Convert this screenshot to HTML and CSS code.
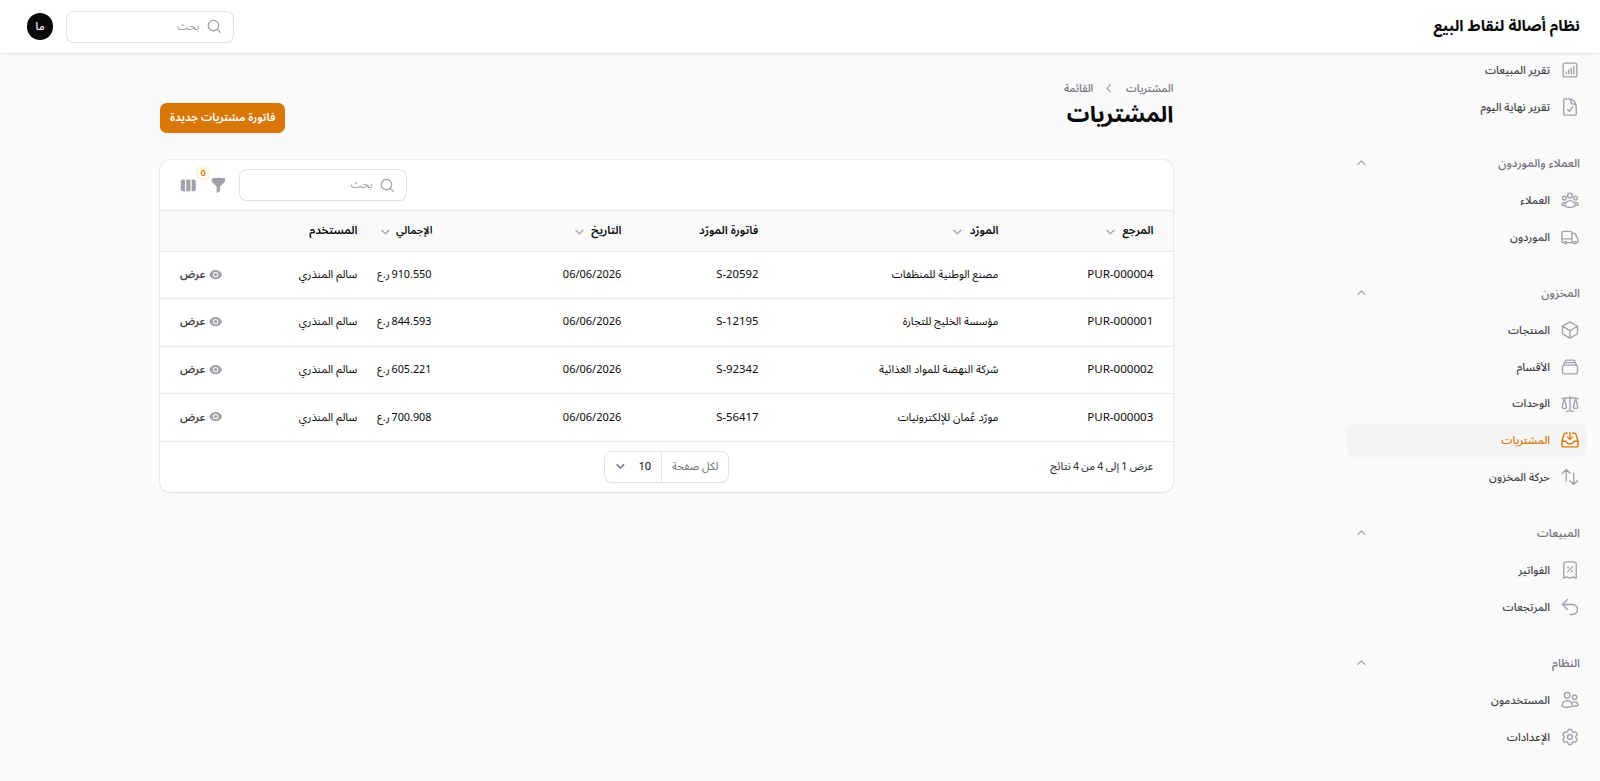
FILE: index.html
```html
<!DOCTYPE html>
<html lang="ar" dir="rtl">
<head>
    <meta charset="UTF-8">
    <meta name="viewport" content="width=device-width, initial-scale=1.0">
    <title>المشتريات</title>
    <link rel="stylesheet" href="styles.css">
</head>
<body>
    <!-- icons -->
    <svg class="sprite">
        <symbol id="chart" viewBox="0 0 24 24"><path d="M7.5 14.25v2.25m3-4.5v4.5m3-6.75v6.75m3-9v9M6 20.25h12A2.25 2.25 0 0 0 20.25 18V6A2.25 2.25 0 0 0 18 3.75H6A2.25 2.25 0 0 0 3.75 6v12A2.25 2.25 0 0 0 6 20.25Z"/></symbol>
        <symbol id="doc" viewBox="0 0 24 24"><path d="M10.125 2.25h-4.5c-.621 0-1.125.504-1.125 1.125v17.25c0 .621.504 1.125 1.125 1.125h12.75c.621 0 1.125-.504 1.125-1.125v-9M10.125 2.25h.375a9 9 0 0 1 9 9v.375M10.125 2.25A3.375 3.375 0 0 1 13.5 5.625v1.5c0 .621.504 1.125 1.125 1.125h1.5a3.375 3.375 0 0 1 3.375 3.375M9 15l2.25 2.25L15 12"/></symbol>
        <symbol id="group" viewBox="0 0 24 24"><path d="M18 18.72a9.094 9.094 0 0 0 3.741-.479 3 3 0 0 0-4.682-2.72m.94 3.198.001.031c0 .225-.012.447-.037.666A11.944 11.944 0 0 1 12 21c-2.17 0-4.207-.576-5.963-1.584A6.062 6.062 0 0 1 6 18.719m12 0a5.971 5.971 0 0 0-.941-3.197m0 0A5.995 5.995 0 0 0 12 12.75a5.995 5.995 0 0 0-5.058 2.772m0 0a3 3 0 0 0-4.681 2.72 8.986 8.986 0 0 0 3.74.477m.94-3.197a5.971 5.971 0 0 0-.94 3.197M15 6.75a3 3 0 1 1-6 0 3 3 0 0 1 6 0Zm6 3a2.25 2.25 0 1 1-4.5 0 2.25 2.25 0 0 1 4.5 0Zm-13.5 0a2.25 2.25 0 1 1-4.5 0 2.25 2.25 0 0 1 4.5 0Z"/></symbol>
        <symbol id="truck" viewBox="0 0 24 24"><path d="M8.25 18.75a1.5 1.5 0 0 1-3 0m3 0a1.5 1.5 0 0 0-3 0m3 0h6m-9 0H3.375a1.125 1.125 0 0 1-1.125-1.125V14.25m17.25 4.5a1.5 1.5 0 0 1-3 0m3 0a1.5 1.5 0 0 0-3 0m3 0h1.125c.621 0 1.129-.504 1.09-1.124a17.902 17.902 0 0 0-3.213-9.193 2.056 2.056 0 0 0-1.58-.86H14.25M16.5 18.75h-2.25m0-11.177v-.958c0-.568-.422-1.048-.987-1.106a48.554 48.554 0 0 0-10.026 0 1.106 1.106 0 0 0-.987 1.106v7.635m12-6.677v6.677m0 4.5v-4.5m0 0h-12"/></symbol>
        <symbol id="cube" viewBox="0 0 24 24"><path d="m21 7.5-9-5.25L3 7.5m18 0-9 5.25m9-5.25v9l-9 5.25M3 7.5l9 5.25M3 7.5v9l9 5.25m0-9v9"/></symbol>
        <symbol id="stack" viewBox="0 0 24 24"><path d="M6 6.878V6a2.25 2.25 0 0 1 2.25-2.25h7.5A2.25 2.25 0 0 1 18 6v.878m-12 0c.235-.083.487-.128.75-.128h10.5c.263 0 .515.045.75.128m-12 0A2.25 2.25 0 0 0 4.5 9v.878m13.5-3A2.25 2.25 0 0 1 19.5 9v.878m0 0a2.246 2.246 0 0 0-.75-.128H5.25c-.263 0-.515.045-.75.128m15 0A2.25 2.25 0 0 1 21 12v6a2.25 2.25 0 0 1-2.25 2.25H5.25A2.25 2.25 0 0 1 3 18v-6c0-.98.626-1.813 1.5-2.122"/></symbol>
        <symbol id="scale" viewBox="0 0 24 24"><path d="M12 3v17.25m0 0c-1.472 0-2.882.265-4.185.75M12 20.25c1.472 0 2.882.265 4.185.75M18.75 4.97A48.416 48.416 0 0 0 12 4.5c-2.291 0-4.545.16-6.75.47m13.5 0c1.01.143 2.01.317 3 .52m-3-.52 2.62 10.726c.122.499-.106 1.028-.589 1.202a5.988 5.988 0 0 1-2.031.352 5.988 5.988 0 0 1-2.031-.352c-.483-.174-.711-.703-.59-1.202L18.75 4.971Zm-16.5.52c.99-.203 1.99-.377 3-.52m0 0 2.62 10.726c.122.499-.106 1.028-.589 1.202a5.989 5.989 0 0 1-2.031.352 5.989 5.989 0 0 1-2.031-.352c-.483-.174-.711-.703-.59-1.202L5.25 4.971Z"/></symbol>
        <symbol id="inbox" viewBox="0 0 24 24"><path d="M9 3.75H6.912a2.25 2.25 0 0 0-2.15 1.588L2.35 13.177a2.25 2.25 0 0 0-.1.661V18a2.25 2.25 0 0 0 2.25 2.25h15A2.25 2.25 0 0 0 21.75 18v-4.162c0-.224-.034-.447-.1-.661L19.24 5.338a2.25 2.25 0 0 0-2.15-1.588H15M2.25 13.5h3.86a2.25 2.25 0 0 1 2.012 1.244l.256.512a2.25 2.25 0 0 0 2.013 1.244h3.218a2.25 2.25 0 0 0 2.013-1.244l.256-.512a2.25 2.25 0 0 1 2.013-1.244h3.859M12 3v8.25m0 0-3-3m3 3 3-3"/></symbol>
        <symbol id="updown" viewBox="0 0 24 24"><path d="M3 7.5 7.5 3m0 0L12 7.5M7.5 3v13.5m13.5 0L16.5 21m0 0L12 16.5m4.5 4.5V7.5"/></symbol>
        <symbol id="receipt" viewBox="0 0 24 24"><path d="m9 14.25 6-6m4.5-3.493V21.75l-3.75-1.5-3.75 1.5-3.75-1.5-3.75 1.5V4.757c0-1.108.806-2.057 1.907-2.185a48.507 48.507 0 0 1 11.186 0c1.1.128 1.907 1.077 1.907 2.185ZM9.75 9h.008v.008H9.75V9Zm.375 0a.375.375 0 1 1-.75 0 .375.375 0 0 1 .75 0Zm4.125 4.5h.008v.008h-.008V13.5Zm.375 0a.375.375 0 1 1-.75 0 .375.375 0 0 1 .75 0Z"/></symbol>
        <symbol id="return" viewBox="0 0 24 24"><path d="M9 15 3 9m0 0 6-6M3 9h12a6 6 0 0 1 0 12h-3"/></symbol>
        <symbol id="users" viewBox="0 0 24 24"><path d="M15 19.128a9.38 9.38 0 0 0 2.625.372 9.337 9.337 0 0 0 4.121-.952 4.125 4.125 0 0 0-7.533-2.493M15 19.128v-.003c0-1.113-.285-2.16-.786-3.07M15 19.128v.106A12.318 12.318 0 0 1 8.624 21c-2.331 0-4.512-.645-6.374-1.766l-.001-.109a6.375 6.375 0 0 1 11.964-3.07M12 6.375a3.375 3.375 0 1 1-6.75 0 3.375 3.375 0 0 1 6.75 0Zm8.25 2.25a2.625 2.625 0 1 1-5.25 0 2.625 2.625 0 0 1 5.25 0Z"/></symbol>
        <symbol id="cog" viewBox="0 0 24 24"><path d="M9.594 3.94c.09-.542.56-.94 1.11-.94h2.593c.55 0 1.02.398 1.11.94l.213 1.281c.063.374.313.686.645.87.074.04.147.083.22.127.325.196.72.257 1.075.124l1.217-.456a1.125 1.125 0 0 1 1.37.49l1.296 2.247a1.125 1.125 0 0 1-.26 1.431l-1.003.827c-.293.241-.438.613-.43.992a7.723 7.723 0 0 1 0 .255c-.008.378.137.75.43.991l1.004.827c.424.35.534.955.26 1.43l-1.298 2.247a1.125 1.125 0 0 1-1.369.491l-1.217-.456c-.355-.133-.75-.072-1.076.124a6.47 6.47 0 0 1-.22.128c-.331.183-.581.495-.644.869l-.213 1.281c-.09.543-.56.94-1.11.94h-2.594c-.55 0-1.019-.398-1.11-.94l-.213-1.281c-.062-.374-.312-.686-.644-.87a6.52 6.52 0 0 1-.22-.127c-.325-.196-.72-.257-1.076-.124l-1.217.456a1.125 1.125 0 0 1-1.369-.49l-1.297-2.247a1.125 1.125 0 0 1 .26-1.431l1.004-.827c.292-.24.437-.613.43-.991a6.932 6.932 0 0 1 0-.255c.007-.38-.138-.751-.43-.992l-1.004-.827a1.125 1.125 0 0 1-.26-1.43l1.297-2.247a1.125 1.125 0 0 1 1.37-.491l1.216.456c.356.133.751.072 1.076-.124.072-.044.146-.086.22-.128.332-.183.582-.495.644-.869l.214-1.28Z"/><path d="M15 12a3 3 0 1 1-6 0 3 3 0 0 1 6 0Z"/></symbol>
        <symbol id="up" viewBox="0 0 20 20"><path d="M9.47 6.47a.75.75 0 0 1 1.06 0l4.25 4.25a.75.75 0 1 1-1.06 1.06L10 8.06l-3.72 3.72a.75.75 0 0 1-1.06-1.06l4.25-4.25Z"/></symbol>
        <symbol id="down" viewBox="0 0 20 20"><path d="M5.22 8.22a.75.75 0 0 1 1.06 0L10 11.94l3.72-3.72a.75.75 0 1 1 1.06 1.06l-4.25 4.25a.75.75 0 0 1-1.06 0L5.22 9.28a.75.75 0 0 1 0-1.06Z"/></symbol>
        <symbol id="left" viewBox="0 0 20 20"><path d="M11.78 5.22a.75.75 0 0 1 0 1.06L8.06 10l3.72 3.72a.75.75 0 1 1-1.06 1.06l-4.25-4.25a.75.75 0 0 1 0-1.06l4.25-4.25a.75.75 0 0 1 1.06 0Z"/></symbol>
        <symbol id="search" viewBox="0 0 20 20"><path d="M9 3.5a5.5 5.5 0 1 0 0 11 5.5 5.5 0 0 0 0-11ZM2 9a7 7 0 1 1 12.452 4.391l3.328 3.329a.75.75 0 1 1-1.06 1.06l-3.329-3.328A7 7 0 0 1 2 9Z" fill-rule="evenodd"/></symbol>
        <symbol id="eye" viewBox="0 0 20 20"><path d="M10 12.5a2.5 2.5 0 1 0 0-5 2.5 2.5 0 0 0 0 5Z"/><path fill-rule="evenodd" d="M.664 10.59a1.651 1.651 0 0 1 0-1.186A10.004 10.004 0 0 1 10 3c4.257 0 7.893 2.66 9.336 6.41.147.381.146.804 0 1.186A10.004 10.004 0 0 1 10 17c-4.257 0-7.893-2.66-9.336-6.41ZM14 10a4 4 0 1 1-8 0 4 4 0 0 1 8 0Z"/></symbol>
        <symbol id="funnel" viewBox="0 0 20 20"><path d="M2.628 1.601C5.028 1.206 7.49 1 10 1s4.973.206 7.372.601a.75.75 0 0 1 .628.74v2.288a2.25 2.25 0 0 1-.659 1.59l-4.682 4.683a2.25 2.25 0 0 0-.659 1.59v3.037c0 .684-.31 1.33-.844 1.757l-1.937 1.55A.75.75 0 0 1 8 18.25v-5.757a2.25 2.25 0 0 0-.659-1.591L2.659 6.22A2.25 2.25 0 0 1 2 4.629V2.34a.75.75 0 0 1 .628-.74Z"/></symbol>
        <symbol id="columns" viewBox="0 0 20 20"><path d="M14 17h2.75A2.25 2.25 0 0 0 19 14.75v-9.5A2.25 2.25 0 0 0 16.75 3H14v14ZM12.5 3h-5v14h5V3ZM3.25 3H6v14H3.25A2.25 2.25 0 0 1 1 14.75v-9.5A2.25 2.25 0 0 1 3.25 3Z"/></symbol>
    </svg>

    <header class="topbar">
        <div class="brand">نظام أصالة لنقاط البيع</div>
        <div class="topbar-end">
            <label class="search">
                <svg class="mini"><use href="#search"/></svg>
                <input type="text" placeholder="بحث">
            </label>
            <div class="avatar">ما</div>
        </div>
    </header>

    <div class="layout">
        <nav class="sidebar">
            <div class="group">
                <a class="item"><svg class="icon"><use href="#chart"/></svg><span>تقرير المبيعات</span></a>
                <a class="item"><svg class="icon"><use href="#doc"/></svg><span>تقرير نهاية اليوم</span></a>
            </div>
            <div class="group">
                <div class="group-title"><span>العملاء والموردون</span><svg class="mini"><use href="#up"/></svg></div>
                <a class="item"><svg class="icon"><use href="#group"/></svg><span>العملاء</span></a>
                <a class="item"><svg class="icon"><use href="#truck"/></svg><span>الموردون</span></a>
            </div>
            <div class="group">
                <div class="group-title"><span>المخزون</span><svg class="mini"><use href="#up"/></svg></div>
                <a class="item"><svg class="icon"><use href="#cube"/></svg><span>المنتجات</span></a>
                <a class="item"><svg class="icon"><use href="#stack"/></svg><span>الأقسام</span></a>
                <a class="item"><svg class="icon"><use href="#scale"/></svg><span>الوحدات</span></a>
                <a class="item active"><svg class="icon"><use href="#inbox"/></svg><span>المشتريات</span></a>
                <a class="item"><svg class="icon"><use href="#updown"/></svg><span>حركة المخزون</span></a>
            </div>
            <div class="group">
                <div class="group-title"><span>المبيعات</span><svg class="mini"><use href="#up"/></svg></div>
                <a class="item"><svg class="icon"><use href="#receipt"/></svg><span>الفواتير</span></a>
                <a class="item"><svg class="icon"><use href="#return"/></svg><span>المرتجعات</span></a>
            </div>
            <div class="group">
                <div class="group-title"><span>النظام</span><svg class="mini"><use href="#up"/></svg></div>
                <a class="item"><svg class="icon"><use href="#users"/></svg><span>المستخدمون</span></a>
                <a class="item"><svg class="icon"><use href="#cog"/></svg><span>الإعدادات</span></a>
            </div>
        </nav>

        <main class="main">
            <div class="page-header">
                <div class="heading">
                    <div class="breadcrumbs">
                        <span>المشتريات</span>
                        <svg class="mini"><use href="#left"/></svg>
                        <span>القائمة</span>
                    </div>
                    <h1>المشتريات</h1>
                </div>
                <button class="btn">فاتورة مشتريات جديدة</button>
            </div>

            <section class="card">
                <div class="toolbar">
                    <label class="search">
                        <svg class="mini"><use href="#search"/></svg>
                        <input type="text" placeholder="بحث">
                    </label>
                    <div class="filter">
                        <svg class="mini"><use href="#funnel"/></svg>
                        <span class="badge">0</span>
                    </div>
                    <svg class="mini"><use href="#columns"/></svg>
                </div>

                <table>
                    <colgroup>
                        <col class="col-ref"><col class="col-supplier"><col class="col-invoice"><col class="col-date"><col class="col-total"><col class="col-user"><col>
                    </colgroup>
                    <thead>
                        <tr>
                            <th><div class="sort">المرجع<svg class="mini"><use href="#down"/></svg></div></th>
                            <th><div class="sort">المورّد<svg class="mini"><use href="#down"/></svg></div></th>
                            <th>فاتورة المورّد</th>
                            <th><div class="sort">التاريخ<svg class="mini"><use href="#down"/></svg></div></th>
                            <th><div class="sort sort-total">الإجمالي<svg class="mini"><use href="#down"/></svg></div></th>
                            <th>المستخدم</th>
                            <th></th>
                        </tr>
                    </thead>
                    <tbody>
                        <tr>
                            <td class="ref">PUR-000004</td>
                            <td>مصنع الوطنية للمنظفات</td>
                            <td class="invoice">S-20592</td>
                            <td class="date">06/06/2026</td>
                            <td class="total">910.550 ر.ع</td>
                            <td class="user">سالم المنذري</td>
                            <td><a class="view"><svg><use href="#eye"/></svg>عرض</a></td>
                        </tr>
                        <tr>
                            <td class="ref">PUR-000001</td>
                            <td>مؤسسة الخليج للتجارة</td>
                            <td class="invoice">S-12195</td>
                            <td class="date">06/06/2026</td>
                            <td class="total">844.593 ر.ع</td>
                            <td class="user">سالم المنذري</td>
                            <td><a class="view"><svg><use href="#eye"/></svg>عرض</a></td>
                        </tr>
                        <tr>
                            <td class="ref">PUR-000002</td>
                            <td>شركة النهضة للمواد الغذائية</td>
                            <td class="invoice">S-92342</td>
                            <td class="date">06/06/2026</td>
                            <td class="total">605.221 ر.ع</td>
                            <td class="user">سالم المنذري</td>
                            <td><a class="view"><svg><use href="#eye"/></svg>عرض</a></td>
                        </tr>
                        <tr>
                            <td class="ref">PUR-000003</td>
                            <td>مورّد عُمان للإلكترونيات</td>
                            <td class="invoice">S-56417</td>
                            <td class="date">06/06/2026</td>
                            <td class="total">700.908 ر.ع</td>
                            <td class="user">سالم المنذري</td>
                            <td><a class="view"><svg><use href="#eye"/></svg>عرض</a></td>
                        </tr>
                    </tbody>
                </table>

                <div class="pagination">
                    <span class="overview">عرض 1 إلى 4 من 4 نتائج</span>
                    <div class="per-page">
                        <span class="per-page-label">لكل صفحة</span>
                        <span class="per-page-value"><span>10</span><svg viewBox="0 0 20 20"><path d="m6 8 4 4 4-4"/></svg></span>
                    </div>
                </div>
            </section>
        </main>
    </div>
</body>
</html>
```
FILE: styles.css
```css
html {
    font-size: 13.3333px;
}
* {
    box-sizing: border-box;
}
body {
    margin: 0;
    height: 100vh;
    overflow: hidden;
    background-color: #fafafa;
    color: #09090b;
    font-family: "Noto Sans", "Noto Sans Arabic", "DejaVu Sans", sans-serif;
    font-size: 0.875rem;
    line-height: 1.25rem;
}
.sprite {
    display: none;
}
.icon {
    width: 1.5rem;
    height: 1.5rem;
    flex-shrink: 0;
    fill: none;
    stroke: #a1a1aa;
    stroke-width: 1.6;
    stroke-linecap: round;
    stroke-linejoin: round;
}
.mini {
    width: 1.25rem;
    height: 1.25rem;
    flex-shrink: 0;
    fill: #a1a1aa;
}

/* top bar */
.topbar {
    position: relative;
    display: flex;
    align-items: center;
    justify-content: space-between;
    height: 4rem;
    padding: 0 1.5rem 0 2rem;
    background-color: white;
    box-shadow: 0 0 0 1px rgba(9, 9, 11, 0.05), 0 1px 2px rgba(0, 0, 0, 0.05);
}
.brand {
    padding-bottom: 3px;
    font-size: 15.5px;
    font-weight: 700;
    line-height: 1.25rem;
}
.topbar-end {
    display: flex;
    align-items: center;
    gap: 1rem;
}
.search {
    display: flex;
    align-items: center;
    gap: 0.5rem;
    width: 12.45rem;
    height: 2.25rem;
    padding: 0 0.75rem;
    background-color: white;
    border-radius: 0.5rem;
    box-shadow: 0 0 0 1px rgba(9, 9, 11, 0.1), 0 1px 2px rgba(0, 0, 0, 0.05);
}
.search input {
    width: 100%;
    padding: 0 0 1px;
    border: none;
    outline: none;
    font: inherit;
    font-size: 11px;
}
.search input::placeholder {
    color: #a1a1aa;
}
.avatar {
    display: flex;
    align-items: center;
    justify-content: center;
    width: 2rem;
    height: 2rem;
    border-radius: 50%;
    background-color: #09090b;
    color: white;
    font-size: 0.8rem;
    font-weight: 500;
}

.layout {
    display: flex;
}

/* sidebar */
.sidebar {
    display: flex;
    flex-direction: column;
    gap: 1.75rem;
    width: 20rem;
    padding: 0.35px 1rem 0;
    flex-shrink: 0;
}
.group {
    display: flex;
    flex-direction: column;
    gap: 0.25rem;
}
.item {
    display: flex;
    align-items: center;
    gap: 0.75rem;
    height: 2.5rem;
    padding: 0 0.5rem;
    border-radius: 0.5rem;
    color: #3f3f46;
    font-size: 11.1px;
    font-weight: 500;
}
.item.active {
    background-color: #f4f4f5;
    color: #d97706;
}
.item.active .icon {
    stroke: #d97706;
}
.group-title {
    display: flex;
    align-items: center;
    justify-content: space-between;
    height: 2.5rem;
    padding: 0 0.5rem;
    color: #71717a;
    font-weight: 500;
}

/* content */
.main {
    flex: 1;
    padding: 2rem 12rem 0;
}
.page-header {
    display: flex;
    align-items: flex-end;
    justify-content: space-between;
    margin-bottom: 2rem;
}
.heading {
    padding-bottom: 4px;
}
.breadcrumbs {
    display: flex;
    align-items: center;
    gap: 0.6rem;
    margin-bottom: 0.2rem;
    color: #71717a;
    font-size: 10.8px;
    font-weight: 500;
}
h1 {
    margin: 0;
    font-size: 22.5px;
    font-weight: 700;
    line-height: 2.25rem;
}
.btn {
    height: 2.3rem;
    padding: 0 0.75rem 2px;
    border: none;
    border-radius: 0.5rem;
    background-color: #d97706;
    color: white;
    font: inherit;
    font-size: 11.2px;
    font-weight: 600;
    box-shadow: 0 1px 2px rgba(0, 0, 0, 0.05);
}
.card {
    border-radius: 0.75rem;
    background-color: white;
    box-shadow: 0 0 0 1px rgba(9, 9, 11, 0.05), 0 1px 2px rgba(0, 0, 0, 0.05);
}
.toolbar {
    display: flex;
    align-items: center;
    justify-content: flex-end;
    gap: 1rem;
    height: 50px;
    padding: 0 1.5rem;
}
.filter {
    position: relative;
    height: 1.25rem;
}
.badge {
    position: absolute;
    top: -0.75rem;
    left: -0.95rem;
    width: 0.9rem;
    height: 0.9rem;
    border-radius: 0.3rem;
    background-color: #fffbeb;
    color: #d97706;
    font-size: 0.7rem;
    font-weight: 600;
    line-height: 0.85rem;
    text-align: center;
    box-shadow: 0 0 0 1px rgba(217, 119, 6, 0.12);
}
table {
    width: 100%;
    table-layout: fixed;
    border-collapse: collapse;
}
.col-ref { width: 165px; }
.col-supplier { width: 240px; }
.col-invoice { width: 137px; }
.col-date { width: 189px; }
.col-total { width: 75px; }
.col-user { width: 80px; }
th, td {
    padding: 0 0.75rem 2px;
    text-align: start;
    font-weight: 400;
    white-space: nowrap;
}
th:first-child, td:first-child {
    padding-right: 1.5rem;
}
th:last-child, td:last-child {
    padding-left: 1.5rem;
}
th {
    height: 41px;
    background-color: #fafafa;
    border-top: 1px solid #e9e9eb;
    font-size: 11.4px;
    font-weight: 600;
}
td {
    height: 47.5px;
    border-top: 1px solid #e9e9eb;
    font-size: 11px;
}
.sort {
    display: flex;
    align-items: center;
    gap: 0.3rem;
}
.sort .mini {
    position: relative;
    top: 1px;
}
.sort-total {
    gap: 0.2rem;
    font-size: 10.5px;
}
.ref {
    font-size: 11.6px;
}
.invoice {
    font-size: 11.3px;
}
.user {
    font-size: 11.2px;
}
.total {
    text-align: end;
    font-size: 10.8px;
    word-spacing: -1px;
}
.view {
    display: flex;
    align-items: center;
    justify-content: flex-end;
    gap: 0.25rem;
    color: #3f3f46;
    font-weight: 600;
}
.view svg {
    width: 1rem;
    height: 1rem;
    fill: #a1a1aa;
}
.pagination {
    display: grid;
    grid-template-columns: 1fr auto 1fr;
    align-items: center;
    height: 50.5px;
    padding: 0 1.5rem;
    border-top: 1px solid #e9e9eb;
}
.overview {
    padding-bottom: 2px;
    color: #3f3f46;
    font-size: 10.6px;
    font-weight: 500;
    word-spacing: -0.5px;
}
.per-page {
    display: flex;
    height: 2.25rem;
    border-radius: 0.5rem;
    box-shadow: 0 0 0 1px rgba(9, 9, 11, 0.1), 0 1px 2px rgba(0, 0, 0, 0.05);
}
.per-page-label,
.per-page-value {
    display: flex;
    align-items: center;
    padding-bottom: 1px;
}
.per-page-label {
    justify-content: center;
    width: 67px;
    border-left: 1px solid #e4e4e7;
    color: #71717a;
    font-size: 10.8px;
}
.per-page-value {
    justify-content: space-between;
    width: 56px;
    padding-right: 0.75rem;
    padding-left: 0.5rem;
    font-size: 11.2px;
}
.per-page-value svg {
    width: 1.25rem;
    height: 1.25rem;
    fill: none;
    stroke: #6b7280;
    stroke-width: 1.8;
    stroke-linecap: round;
    stroke-linejoin: round;
}
```
